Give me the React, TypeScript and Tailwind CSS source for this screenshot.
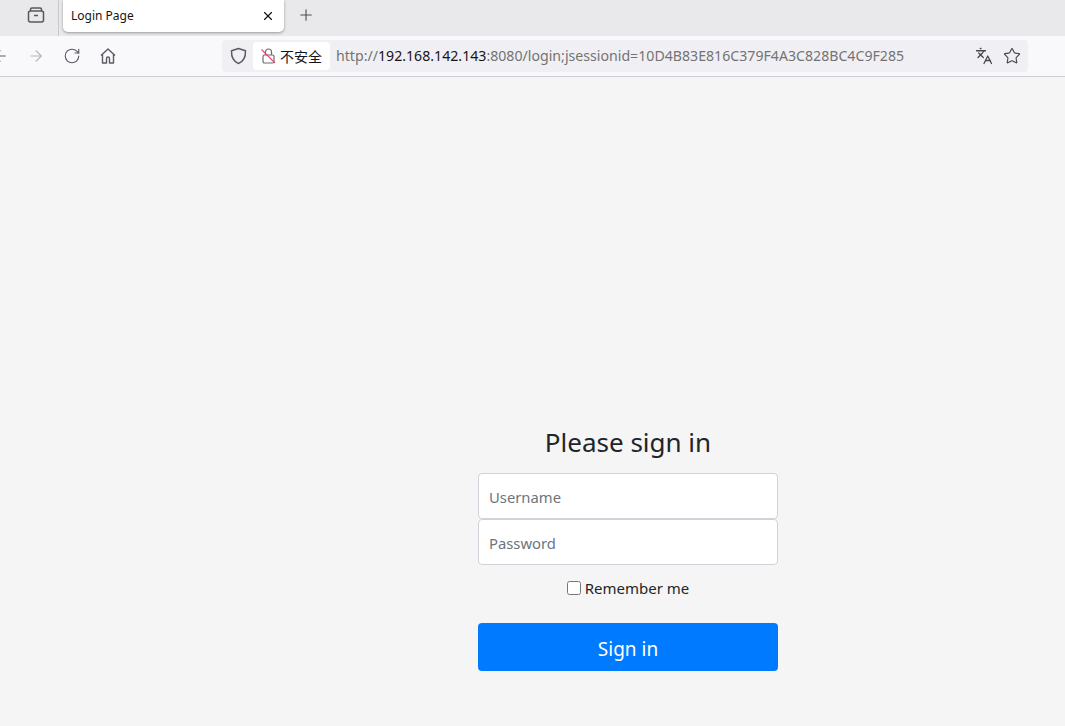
import React from 'react';
import { ArrowLeft, ArrowRight, RotateCw, Languages, Star, X, Plus } from 'lucide-react';

const font = "font-['Noto_Sans','Noto_Sans_CJK_SC',sans-serif]";

const App: React.FC = () => {
  return (
    <div className={`h-[726px] w-[1065px] overflow-hidden bg-[#f5f5f5] flex flex-col ${font}`}>
      {/* Tab strip */}
      <div className="h-9 shrink-0 bg-[#e9e9ec] flex">
        <div className="w-[59px] h-9 border-r border-[#c8c8cc] flex items-center justify-end pr-[13px] pb-[6px] shrink-0">
          <svg width="18" height="18" viewBox="0 0 18 18" fill="none" stroke="#57575c" strokeWidth="1.5">
            <rect x="1.5" y="5" width="15" height="11" rx="2" />
            <path d="M3.5 5V3.5A1.5 1.5 0 0 1 5 2h8a1.5 1.5 0 0 1 1.5 1.5V5" />
            <path d="M7 9.5h4" />
          </svg>
        </div>
        <div className="ml-[4px] w-[221px] h-[32px] bg-white rounded-b-[5px] shadow-[0_1px_3px_rgba(0,0,0,0.35)] flex items-center justify-between pl-[8px] pr-[9px]">
          <span className="text-[12px] text-[#15141a] pb-px">Login Page</span>
          <X size={14} strokeWidth={2} className="text-[#15141a]" />
        </div>
        <div className="ml-[13px] h-[30px] flex items-center">
          <Plus size={18} strokeWidth={1.5} className="text-[#4f4f54]" />
        </div>
      </div>

      {/* Toolbar */}
      <div className="h-[41px] shrink-0 bg-[#f9f9fb] border-b border-[#cfcfd8] flex items-center">
        <div className="w-[222px] shrink-0 flex items-center overflow-hidden">
          <ArrowLeft size={18} strokeWidth={1.5} className="text-[#5b5b66] ml-[-9px] shrink-0" />
          <ArrowRight size={18} strokeWidth={1.5} className="text-[#b5b5bb] ml-[18px] shrink-0" />
          <RotateCw size={18} strokeWidth={1.5} className="text-[#5b5b66] ml-[18px] shrink-0" />
          <svg width="18" height="18" viewBox="0 0 18 18" fill="none" stroke="#5b5b66" strokeWidth="1.4" className="ml-[18px] shrink-0">
            <path d="M2 8.5 9 2l7 6.5M3.5 7.5V16h4v-4.5a1.5 1.5 0 0 1 3 0V16h4V7.5" strokeLinejoin="round" />
          </svg>
        </div>
        <div className="w-[806px] h-8 bg-[#f0f0f4] rounded-[4px] flex items-center pl-[8px] pr-[7px]">
          <svg width="17" height="18" viewBox="0 0 17 18" fill="none" stroke="#5b5b66" strokeWidth="1.5">
            <path d="M8.5 1.5 15.5 3.800c.2 6-1.500 10.600-7 12.700C3 14.400 1.300 9.800 1.500 3.800Z" strokeLinejoin="round" />
          </svg>
          <div className="ml-[6px] w-[77px] h-7 bg-white rounded-[4px] flex items-center pl-[8px] shrink-0">
            <svg width="15" height="16" viewBox="0 0 15 16" fill="none" className="shrink-0">
              <rect x="2" y="7" width="11" height="8" rx="1.500" stroke="#6b6b74" strokeWidth="1.200" />
              <path d="M4.500 7V4a3 3 0 0 1 6 0v3" stroke="#6b6b74" strokeWidth="1.200" />
              <path d="M0.500 1.500 14 15" stroke="#e8476f" strokeWidth="1.100" />
            </svg>
            <span className="ml-[4px] text-[14px] leading-none text-[#15141a] whitespace-nowrap font-['Noto_Sans_CJK_SC',sans-serif]">不安全</span>
          </div>
          <div className="ml-[6px] text-[14.15px] text-[#737373] whitespace-nowrap flex-1">
            http://<span className="text-[#15141a]">192.168.142.143</span>:8080/login;jsessionid=10D4B83E816C379F4A3C828BC4C9F285
          </div>
          <Languages size={18} strokeWidth={1.700} className="text-[#45454c] shrink-0" />
          <Star size={18} strokeWidth={1.500} className="text-[#45454c] ml-[10px] shrink-0" />
        </div>
      </div>

      {/* Page */}
      <div className="flex-1 flex justify-center pt-[348px] pl-[191px]">
        <form className="w-[300px] flex flex-col items-center" onSubmit={(e) => e.preventDefault()}>
          <h1 className="text-[26px] leading-[35px] text-[#212529] font-normal whitespace-nowrap">Please sign in</h1>
          <input
            placeholder="Username"
            className="mt-[13px] w-full h-[46px] bg-white border border-[#ced4da] rounded-[4px] pl-[10px] pr-[10px] pt-[2px] text-[14.800px] text-[#495057] placeholder:text-[#6c757d] outline-none"
          />
          <input
            placeholder="Password"
            className="w-full h-[46px] bg-white border border-[#ced4da] rounded-[4px] pl-[10px] pr-[10px] pt-[2px] text-[14.800px] text-[#495057] placeholder:text-[#6c757d] outline-none"
          />
          <label className="mt-[11px] h-6 flex items-center text-[15px] text-[#212529]">
            <input type="checkbox" className="w-[14px] h-[14px] mr-[4px]" />
            Remember me
          </label>
          <button className="mt-[23px] w-full h-12 bg-[#007bff] rounded-[4px] text-white text-[19px] pt-[4px]">Sign in</button>
        </form>
      </div>
    </div>
  );
};

export default App;
